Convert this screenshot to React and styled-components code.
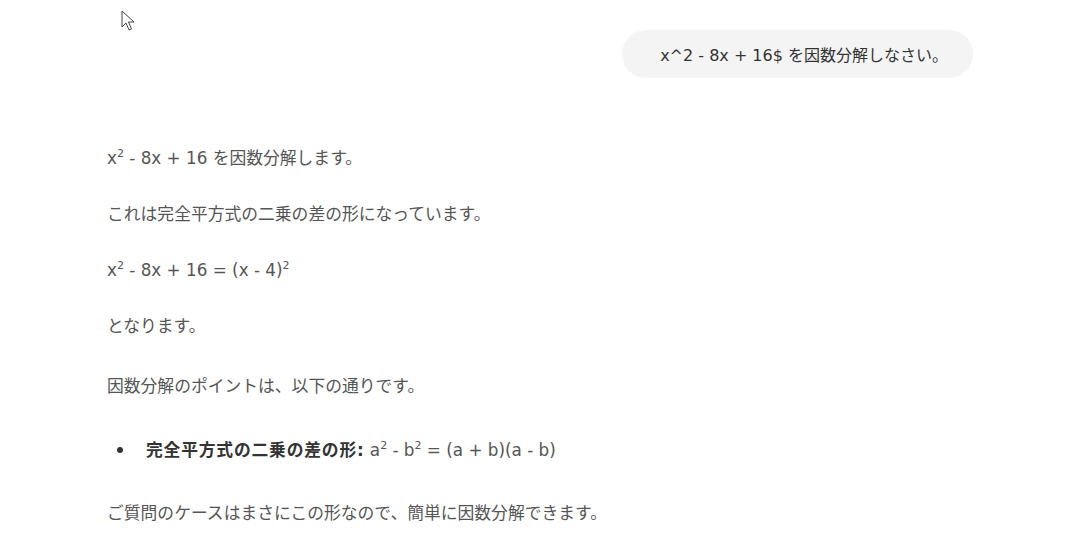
import React from 'react';
import styled, { createGlobalStyle } from 'styled-components';

const GlobalStyle = createGlobalStyle`
  html, body {
    margin: 0;
    padding: 0;
    background: #ffffff;
  }
  body {
    font-family: "DejaVu Sans", "Noto Sans CJK JP", sans-serif;
    -webkit-font-smoothing: antialiased;
  }
`;

const Page = styled.div`
  position: relative;
  min-height: 557px;
  overflow: hidden;
`;

const Column = styled.main`
  max-width: 872px;
  margin: 0 auto;
  padding-top: 30px;
  display: flex;
  flex-direction: column;
`;

const UserRow = styled.div`
  display: flex;
  justify-content: flex-end;
  padding-right: 6px;
`;

const UserBubble = styled.div`
  background: #f4f4f4;
  border-radius: 24px;
  padding: 0 25px 0 38px;
  height: 48px;
  display: flex;
  align-items: center;
  font-size: 16px;
  color: #333;
`;

const Answer = styled.div`
  margin-top: 68px;
  color: #555;
  font-size: 16.8px;
  line-height: 24px;
`;

const Para = styled.p`
  margin: ${p => p.$gap || 32}px 0 0;
  &:first-child {
    margin-top: 0;
  }
`;

const Sup = styled.sup`
  font-size: 11px;
  line-height: 0;
  vertical-align: 7px;
`;

const List = styled.ul`
  margin: 40px 0 0;
  padding: 0;
  list-style: none;
`;

const Item = styled.li`
  display: flex;
  align-items: center;
`;

const Bullet = styled.span`
  width: 39px;
  flex: none;
  display: flex;
  &::before {
    content: '';
    width: 6px;
    height: 6px;
    margin-left: 10px;
    border-radius: 50%;
    background: #333;
  }
`;

const Strong = styled.strong`
  color: #333;
  font-weight: 700;
  letter-spacing: 0.8px;
`;

const Cursor = styled.svg`
  position: absolute;
  left: 121px;
  top: 10px;
`;

export default function App() {
  return (
    <Page>
      <GlobalStyle />
      <Cursor width="16" height="24" viewBox="0 0 16 24">
        <path
          d="M1 1 L1 17 L5 13 L8 20 L10.5 19 L7.5 12 L13 12 Z"
          fill="#fff"
          stroke="#444"
          strokeWidth="1"
          strokeLinejoin="round"
        />
      </Cursor>
      <Column>
        <UserRow>
          <UserBubble>x^2 - 8x + 16$ を因数分解しなさい。</UserBubble>
        </UserRow>
        <Answer>
          <Para>x<Sup>2</Sup> - 8x + 16 を因数分解します。</Para>
          <Para>これは完全平方式の二乗の差の形になっています。</Para>
          <Para>x<Sup>2</Sup> - 8x + 16 = (x - 4)<Sup>2</Sup></Para>
          <Para>となります。</Para>
          <Para $gap={36}>因数分解のポイントは、以下の通りです。</Para>
          <List>
            <Item>
              <Bullet />
              <span>
                <Strong>完全平方式の二乗の差の形:</Strong> a<Sup>2</Sup> - b<Sup>2</Sup> = (a + b)(a - b)
              </span>
            </Item>
          </List>
          <Para $gap={39}>ご質問のケースはまさにこの形なので、簡単に因数分解できます。</Para>
        </Answer>
      </Column>
    </Page>
  );
}
